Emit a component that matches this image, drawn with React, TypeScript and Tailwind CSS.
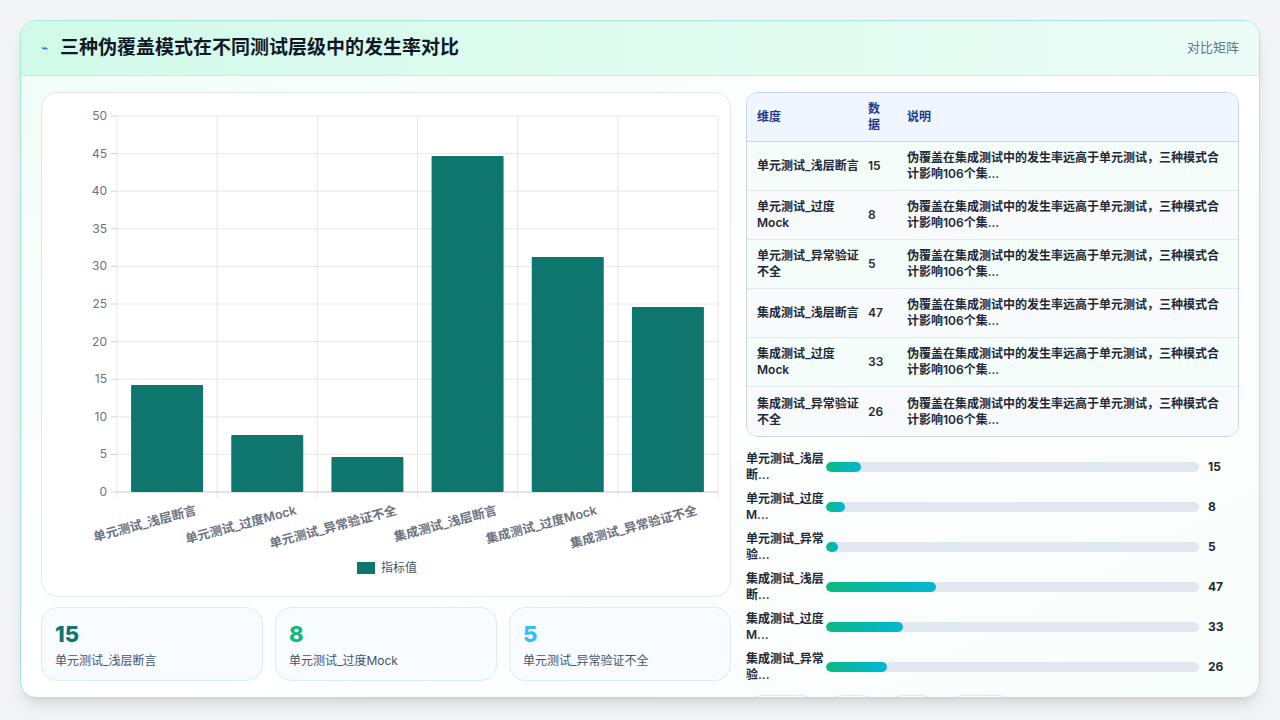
import React from 'react';

const rows = [
  { name: '单元测试_浅层断言', short: '单元测试_浅层断...', v: 15, top: 384 },
  { name: '单元测试_过度Mock', short: '单元测试_过度M...', v: 8, top: 434 },
  { name: '单元测试_异常验证不全', short: '单元测试_异常验...', v: 5, top: 456 },
  { name: '集成测试_浅层断言', short: '集成测试_浅层断...', v: 47, top: 155 },
  { name: '集成测试_过度Mock', short: '集成测试_过度M...', v: 33, top: 256 },
  { name: '集成测试_异常验证不全', short: '集成测试_异常验...', v: 26, top: 306 },
];

const desc = '伪覆盖在集成测试中的发生率远高于单元测试，三种模式合计影响106个集...';

function Chart() {
  // plot coords relative to the panel (panel at x=40,y=92)
  const x0 = 75, x1 = 676, y0 = 23, y1 = 399;
  const step = (y1 - y0) / 10;
  const cw = (x1 - x0) / 6;
  return (
    <svg width="690" height="505" className="block">
      {Array.from({ length: 11 }).map((_, i) => {
        const y = y1 - i * step;
        return (
          <g key={i}>
            <line x1={x0} x2={x1} y1={y} y2={y} stroke="#e5e7eb" />
            <line x1={x0 - 6} x2={x0} y1={y} y2={y} stroke="#d1d5db" />
            <text x={x0 - 10} y={y + 4} textAnchor="end" fontSize="12" fill="#6b7280">{i * 5}</text>
          </g>
        );
      })}
      {Array.from({ length: 7 }).map((_, i) => (
        <line key={i} x1={x0 + i * cw} x2={x0 + i * cw} y1={y0} y2={y1 + 6} stroke="#e5e7eb" />
      ))}
      <line x1={x0} x2={x1} y1={y1} y2={y1} stroke="#d1d5db" />
      {rows.map((r, i) => {
        const top = r.top - 92;
        const cx = x0 + cw * i + cw / 2;
        return (
          <g key={r.name}>
            <rect x={cx - 36} y={top} width={72} height={y1 - top} fill="#0f766e" rx="1" />
            <text x={cx + 30} y={y1 + 22} textAnchor="end" fontSize="12.5" fontWeight="600" fill="#6b7280" transform={`rotate(-15 ${cx + 30} ${y1 + 22})`}>{r.name}</text>
          </g>
        );
      })}
      <rect x="315" y="469" width="18" height="12" fill="#0f766e" />
      <text x="339" y="479" fontSize="12" fill="#4b5563">指标值</text>
    </svg>
  );
}

export default function App() {
  return (
    <div className="w-[1280px] h-[720px] bg-[#f3f4f6] p-5 pb-[22px]" style={{ fontFamily: 'Inter, "Noto Sans CJK SC", sans-serif' }}>
      <div className="h-full rounded-2xl border border-[#a7eadb] bg-gradient-to-br from-[#f0fdf7] via-white to-[#f7fdfb] shadow-lg overflow-hidden flex flex-col">
        <div className="h-[55px] shrink-0 flex items-center justify-between px-5 bg-gradient-to-r from-[#d1fae9] to-[#ecfdf7] border-b border-[#c7efe2]">
          <div className="flex items-center gap-3">
            <span className="text-[#2563eb] text-xs">⌁</span>
            <h1 className="text-[19px] font-bold text-[#111827]">三种伪覆盖模式在不同测试层级中的发生率对比</h1>
          </div>
          <span className="text-[13px] text-[#64748b]">对比矩阵</span>
        </div>
        <div className="flex gap-[15px] px-5 pt-4">
          <div className="w-[690px] flex flex-col gap-[10px]">
            <div className="h-[505px] rounded-2xl border border-[#e2e8f0] bg-white overflow-hidden">
              <Chart />
            </div>
            <div className="grid grid-cols-3 gap-3">
              {[
                { v: 15, l: '单元测试_浅层断言', c: 'text-[#0f766e]' },
                { v: 8, l: '单元测试_过度Mock', c: 'text-[#10b981]' },
                { v: 5, l: '单元测试_异常验证不全', c: 'text-[#38bdf8]' },
              ].map((s) => (
                <div key={s.l} className="h-[74px] rounded-2xl border border-[#dbeafe] bg-[#f8fbff] px-[13px] pt-3">
                  <div className={`text-[22px] leading-7 font-extrabold ${s.c}`}>{s.v}</div>
                  <div className="text-[12px] text-[#475569] mt-1">{s.l}</div>
                </div>
              ))}
            </div>
          </div>
          <div className="flex-1 flex flex-col pr-0">
            <div className="rounded-xl border border-[#cbd5e1] overflow-hidden bg-white">
              <div className="flex h-[49px] items-center bg-[#eff6ff] border-b border-[#cbd5e1] text-[12px] font-bold text-[#1e3a8a]">
                <div className="w-[121px] pl-[10px]">维度</div>
                <div className="w-[39px] leading-4">数<br />据</div>
                <div className="flex-1">说明</div>
              </div>
              {rows.map((r, i) => (
                <div key={r.name} className={`flex h-[49px] items-center text-[12px] font-semibold text-[#1f2937] border-b border-[#e2e8f0] last:border-b-0 ${i % 2 ? 'bg-[#f8fafc]' : 'bg-[#f5fdfa]'}`}>
                  <div className="w-[121px] pl-[10px] pr-2 leading-4">{r.name}</div>
                  <div className="w-[39px]">{r.v}</div>
                  <div className="flex-1 pr-2 leading-4">{desc}</div>
                </div>
              ))}
            </div>
            <div className="flex flex-col mt-[10px]">
              {rows.map((r) => (
                <div key={r.name} className="h-10 flex items-center">
                  <div className="w-[80px] text-[12px] font-semibold text-[#1f2937] leading-4 break-all">{r.short}</div>
                  <div className="w-[373px] h-[10px] rounded-full bg-[#e2e8f0] overflow-hidden">
                    <div className="h-full rounded-full bg-gradient-to-r from-[#10b981] to-[#06b6d4]" style={{ width: `${(r.v / 160) * 100}%` }} />
                  </div>
                  <div className="ml-[9px] text-[12px] font-bold text-[#1f2937]">{r.v}</div>
                </div>
              ))}
            </div>
            <div className="flex gap-2 mt-2">
              {[72, 52, 52, 70].map((w, i) => (
                <div key={i} className="h-8 rounded-full border border-[#e2e8f0] bg-white" style={{ width: w }} />
              ))}
            </div>
          </div>
        </div>
      </div>
    </div>
  );
}
